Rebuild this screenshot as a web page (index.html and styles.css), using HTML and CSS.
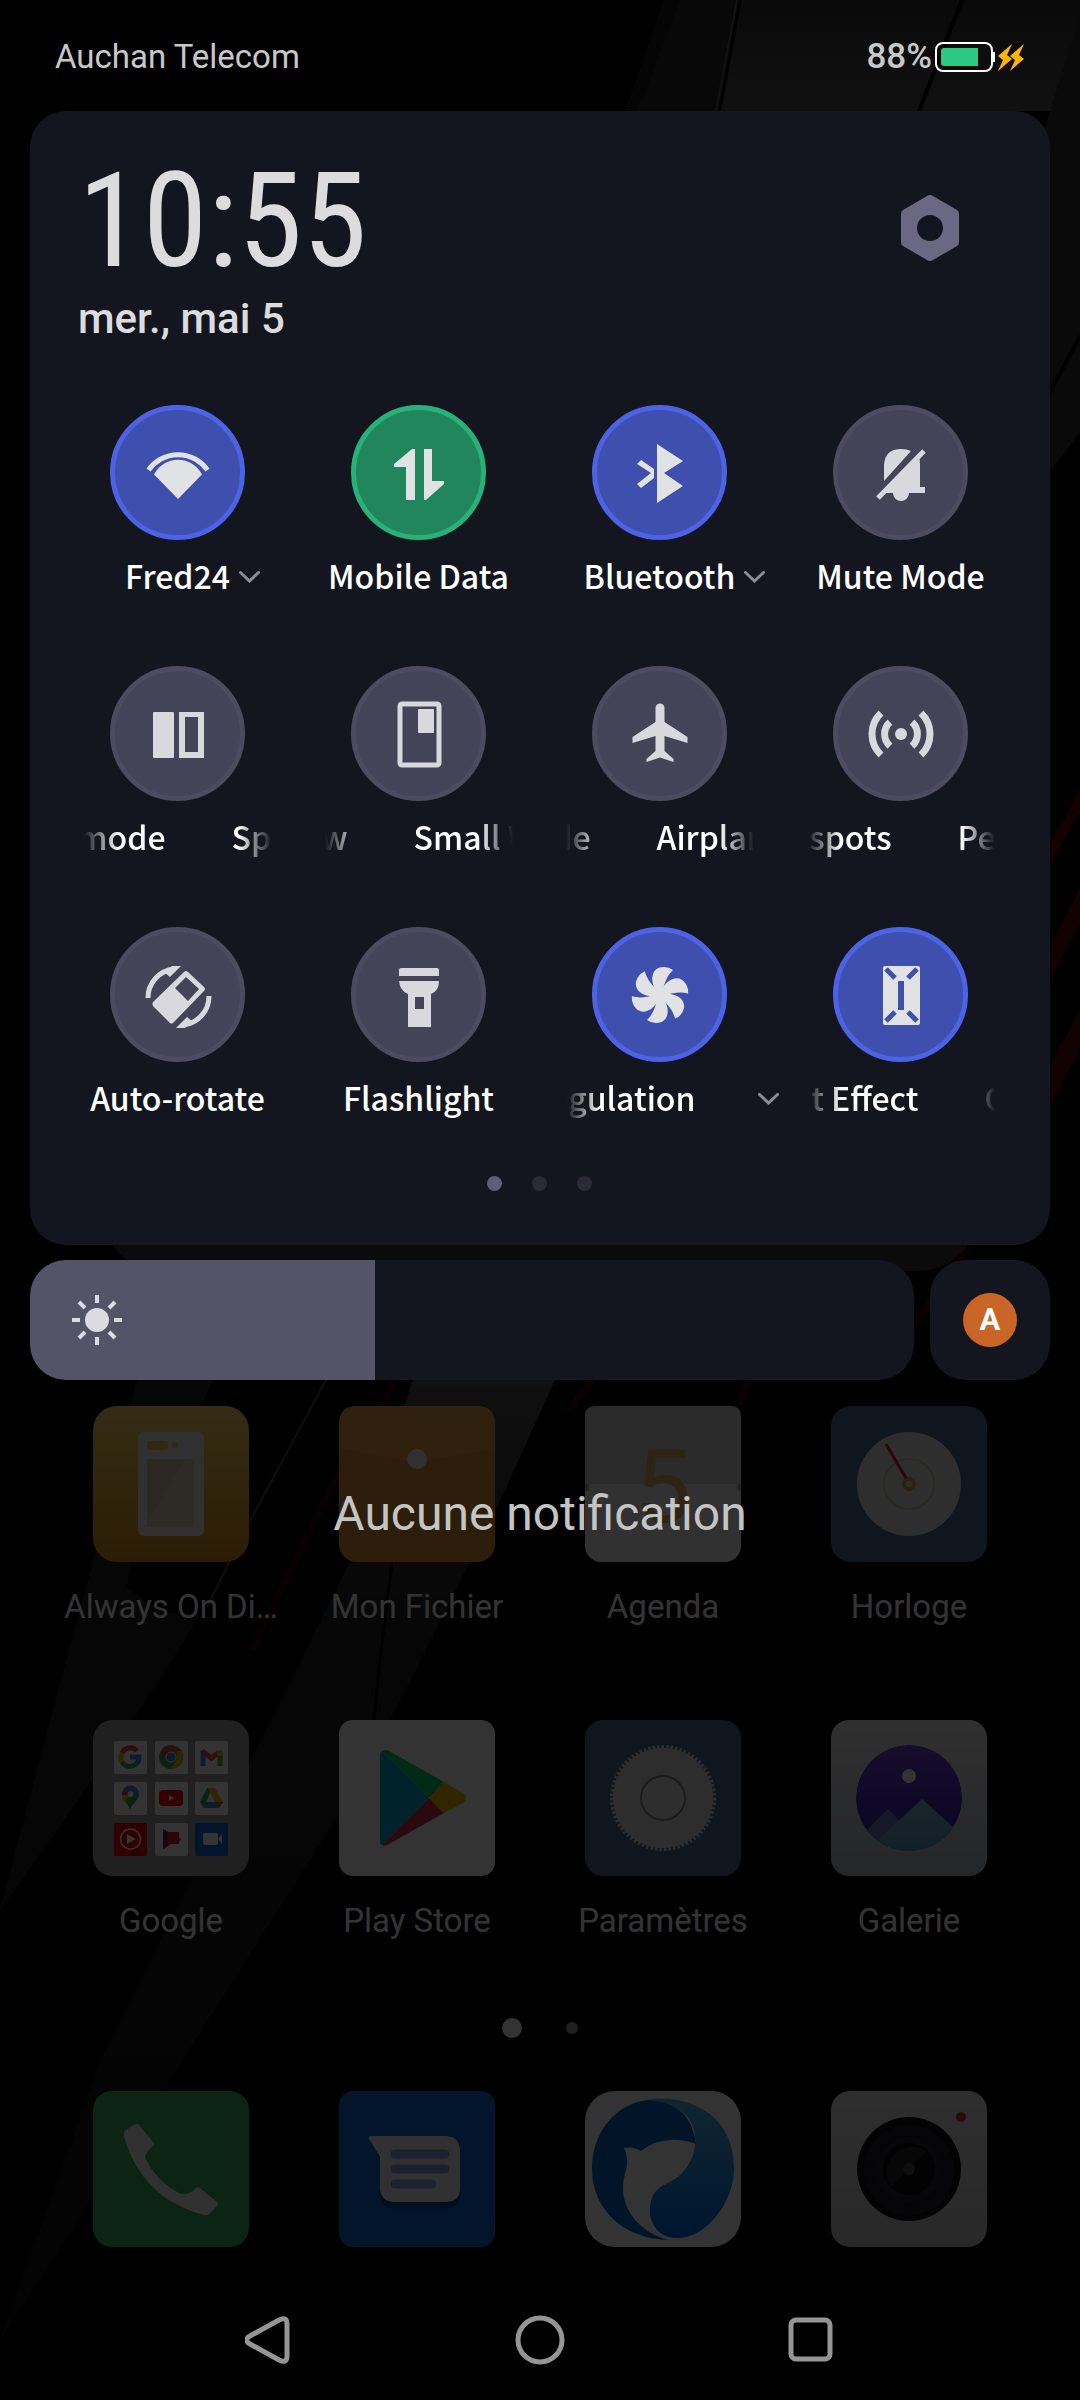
FILE: index.html
```html
<!DOCTYPE html>
<html lang="fr">
  <head>
    <meta charset="UTF-8" />
    <meta name="viewport" content="width=device-width, initial-scale=1.0" />
    <title>Quick Settings</title>
    <link rel="stylesheet" href="styles.css">
  </head>
  <body>
    <div class="screen">
      <svg class="wallpaper" viewBox="0 0 1080 2400" preserveAspectRatio="xMidYMin slice" aria-hidden="true">
        <defs>
          <linearGradient id="beam" x1="0" y1="0" x2="0" y2="1">
            <stop offset="0" stop-color="#505050" />
            <stop offset="0.25" stop-color="#232323" />
            <stop offset="1" stop-color="#121212" />
          </linearGradient>
          <linearGradient id="slab" x1="0" y1="0" x2="0" y2="1">
            <stop offset="0" stop-color="#323232" />
            <stop offset="0.25" stop-color="#555" />
            <stop offset="1" stop-color="#323232" />
          </linearGradient>
        </defs>
        <path fill="#1c1c1c" d="M664 0H690L640 111H625Z" />
        <path fill="#282828" d="M680 0H738L719 111H638Z" />
        <path fill="url(#slab)" d="M742 0H1080V432L1050 472V111H721Z" />
        <path stroke="#5a5a5a" stroke-width="2" d="M737 0L716 111" />
        <path stroke="#000" stroke-width="4" d="M962 0L919 111" />
        <path fill="#323232" d="M1080 15L1044 130V472L1080 432Z" />
        <path stroke="#000" stroke-width="4" d="M1050 392L1080 336" />
        <path fill="#5a0a05" d="M1050 845L1080 788V813L1050 864ZM1050 946L1080 888V926L1050 978ZM1050 1065L1080 1010V1050L1050 1105Z" />
        <path fill="#1e1e1e" d="M137 1380H213L131 1565L127 1587L160 1612L200 1615L160 1680L60 1826L0 1910L69 1650L93 1562Z" />
        <path fill="url(#beam)" d="M413 1380H555L505 1490L411 1680L338 1816L183 2060L0 2340L101 2060L193 1877L291 1680L350 1562Z" />
        <path stroke="#000" stroke-width="3" fill="none" d="M392 1562L381 1650L374 1720" />
        <path stroke="#464646" stroke-width="2" fill="none" d="M326 1380L249 1523L207 1607" />
        <path stroke="#2d0505" stroke-width="7" fill="none" d="M395 1380L331 1487L252 1650" />
        <path stroke="#370505" stroke-width="7" fill="none" d="M592 1380L568 1412M748 1380L738 1406M967 1247L916 1323" />
      </svg>

      <main class="home">
        <div class="widget"></div>
        <div class="apps">
          <a class="app" href="#">
            <svg viewBox="0 0 156 156" aria-hidden="true">
              <defs>
                <linearGradient id="gold" x1="0" y1="0" x2="0" y2="1">
                  <stop offset="0" stop-color="#ffdc64" />
                  <stop offset="1" stop-color="#dc8c1e" />
                </linearGradient>
              </defs>
              <rect width="156" height="156" rx="24" fill="url(#gold)" />
              <rect x="45" y="26" width="66" height="104" rx="6" fill="#f0f0f0" />
              <rect x="54" y="35" width="21" height="9" rx="3" fill="#f0c850" />
              <circle cx="82" cy="39" r="3" fill="#f0c850" />
              <path fill="#dccdaa" d="M54 53H101V121H54Z" />
              <path fill="#e6d7b4" d="M92 53H101V121H54V118Z" />
            </svg>
            Always On Di…
          </a>
          <a class="app" href="#">
            <svg viewBox="0 0 156 156" aria-hidden="true">
              <rect width="156" height="156" rx="18" fill="#e19637" />
              <path fill="#eba546" d="M0 18Q0 0 18 0H138Q156 0 156 18V42L92 54H64L0 42Z" />
              <circle cx="78" cy="53" r="10" fill="#eee" />
            </svg>
            Mon Fichier
          </a>
          <a class="app" href="#">
            <svg viewBox="0 0 156 156" aria-hidden="true">
              <rect width="156" height="156" rx="16" fill="#f5f5f5" />
              <path fill="#d7d7d7" d="M0 10Q0 0 10 0H146Q156 0 156 10V78H0Z" />
              <text class="agenda-day" x="78" y="116" text-anchor="middle">5</text>
              <path fill="#b4b4b4" d="M0 78H4V85H0ZM152 78H156V85H152Z" />
            </svg>
            Agenda
          </a>
          <a class="app" href="#">
            <svg viewBox="0 0 156 156" aria-hidden="true">
              <rect width="156" height="156" rx="20" fill="#506e96" />
              <circle cx="78" cy="78" r="52" fill="#e6e6e6" />
              <circle cx="78" cy="78" r="25" fill="none" stroke="#d2c8aa" stroke-width="2" />
              <path stroke="#dc1e28" stroke-width="3" d="M55 38L76 74" />
              <circle cx="78" cy="78" r="5" fill="none" stroke="#d7aa46" stroke-width="4" />
            </svg>
            Horloge
          </a>
          <a class="app" href="#">
            <svg viewBox="0 0 156 156" aria-hidden="true">
              <rect width="156" height="156" rx="20" fill="#a0a0a0" />
              <g fill="#fff">
                <rect x="21" y="21" width="33" height="33" rx="2" />
                <rect x="62" y="21" width="33" height="33" rx="2" />
                <rect x="102" y="21" width="33" height="33" rx="2" />
                <rect x="21" y="62" width="33" height="33" rx="2" />
                <rect x="62" y="62" width="33" height="33" rx="2" />
                <rect x="102" y="62" width="33" height="33" rx="2" />
                <rect x="62" y="103" width="33" height="33" rx="2" />
              </g>
              <rect x="21" y="103" width="33" height="33" rx="2" fill="#f00000" />
              <rect x="102" y="103" width="33" height="33" rx="2" fill="#0f69d7" />
              <!-- search -->
              <g fill="none" stroke-width="5">
                <path stroke="#ea4335" d="M29 33A9 9 0 0 1 44 31" />
                <path stroke="#fbbc05" d="M29 33A9 9 0 0 0 29 42" />
                <path stroke="#34a853" d="M29 42A9 9 0 0 0 43 44" />
                <path stroke="#4285f4" d="M37 37H46A9 9 0 0 1 43 44" />
              </g>
              <!-- browser -->
              <circle cx="78" cy="37" r="12" fill="#34a853" />
              <path fill="#ea4335" d="M68 31A12 12 0 0 1 88 31H78L72 39Z" />
              <path fill="#fbbc05" d="M88 31A12 12 0 0 1 78 49L84 39V31Z" />
              <circle cx="78" cy="37" r="5" fill="#4285f4" stroke="#fff" stroke-width="1" />
              <!-- mail -->
              <g fill="none" stroke-width="5">
                <path stroke="#4285f4" d="M110 46V31" />
                <path stroke="#34a853" d="M127 46V31" />
                <path stroke="#ea4335" d="M109 31L118.500 38L125 33" />
                <path stroke="#fbbc05" d="M127 36V30" />
              </g>
              <!-- maps -->
              <path fill="#34a853" d="M46 74C46 81 38 84 37 90C36 84 29 81 29 74Z" />
              <path fill="#4285f4" d="M29 74A8.500 8.500 0 0 1 46 74Z" />
              <path fill="#fbbc05" d="M38 75L31 82Q29 79 29 75Z" />
              <path fill="#ea4335" d="M29 75Q29 71 31 69L36 74Z" />
              <circle cx="37.500" cy="74" r="3" fill="#fff" />
              <!-- video -->
              <rect x="66" y="70" width="24" height="16" rx="4" fill="#f00" />
              <path fill="#fff" d="M76 75L81 78L76 81Z" />
              <!-- drive -->
              <path fill="#34a853" d="M114 68H119L111 88L107 82Z" />
              <path fill="#fbbc05" d="M115 68H122L130 82H122Z" />
              <path fill="#4285f4" d="M112 82H130L126 88H110Z" />
              <path fill="#ea4335" d="M123 82H130L126 88Z" />
              <!-- music -->
              <circle cx="37.500" cy="119" r="10" fill="none" stroke="#fff" stroke-width="1.500" />
              <path fill="#fff" d="M34 114L43 119L34 124Z" />
              <!-- movies -->
              <path fill="#dc143c" d="M70 109L75 112H86V117L88 119L86 122V124H78L70 129Z" />
              <path fill="#8c0f46" d="M70 109L75 112V126L70 129Z" />
              <!-- meet -->
              <rect x="110" y="113" width="15" height="12" rx="2" fill="#fff" />
              <path fill="#fff" d="M125 119L129 114V124Z" />
            </svg>
            Google
          </a>
          <a class="app" href="#">
            <svg viewBox="0 0 156 156" aria-hidden="true">
              <rect width="156" height="156" rx="14" fill="#fff" />
              <path fill="#00afd7" d="M41 35V121Q41 124 43 125L90 78L43 31Q41 32 41 35Z" />
              <path fill="#00d264" d="M43 31Q46 29 50 31L105 62L90 78Z" />
              <path fill="#f0be00" d="M105 62L124 73Q130 78 124 83L105 93L90 78Z" />
              <path fill="#d7324b" d="M43 125Q46 127 50 124L105 93L90 78Z" />
            </svg>
            Play Store
          </a>
          <a class="app" href="#">
            <svg viewBox="0 0 156 156" aria-hidden="true">
              <rect width="156" height="156" rx="18" fill="#506e96" />
              <circle cx="78" cy="78" r="50" fill="#e1e1e1" />
              <circle cx="78" cy="78" r="51" fill="none" stroke="#e1e1e1" stroke-width="4" stroke-dasharray="2.500 2" />
              <circle cx="78" cy="78" r="22" fill="#e6e6e6" stroke="#82878c" stroke-width="2" />
            </svg>
            Paramètres
          </a>
          <a class="app" href="#">
            <svg viewBox="0 0 156 156" aria-hidden="true">
              <defs>
                <linearGradient id="frame" x1="0" y1="0" x2="0" y2="1">
                  <stop offset="0" stop-color="#ebebee" />
                  <stop offset="1" stop-color="#b9bec8" />
                </linearGradient>
                <linearGradient id="night" x1="0" y1="0" x2="0" y2="1">
                  <stop offset="0" stop-color="#7341e1" />
                  <stop offset="0.8" stop-color="#3723af" />
                </linearGradient>
                <linearGradient id="hill" x1="0" y1="0" x2="0" y2="1">
                  <stop offset="0" stop-color="#78c3cd" />
                  <stop offset="1" stop-color="#5a9bc8" />
                </linearGradient>
                <clipPath id="lens"><circle cx="78" cy="78" r="53" /></clipPath>
              </defs>
              <rect width="156" height="156" rx="18" fill="url(#frame)" />
              <g clip-path="url(#lens)">
                <circle cx="78" cy="78" r="53" fill="url(#night)" />
                <path fill="#7d78c8" d="M57 89L20 126H94Z" />
                <path fill="url(#hill)" d="M91 79L34 132H150Z" />
              </g>
              <circle cx="78" cy="56" r="7" fill="#fff" />
            </svg>
            Galerie
          </a>
        </div>
        <div class="pager home-pager">
          <span class="home-dot current"></span>
          <span class="home-dot"></span>
        </div>
        <div class="dock">
          <a class="app" href="#" aria-label="Téléphone">
            <svg viewBox="0 0 156 156" aria-hidden="true">
              <rect width="156" height="156" rx="19" fill="#37b45f" />
              <path fill="#f5f5f5" d="M42 33Q44 32 46 34L60 51Q62 53 60 55Q53 60 52 67Q64 91 88 103Q97 104 103 97Q105 95 107 97L124 111Q126 113 124 115L116 123Q114 125 111 124Q48 107 31 45Q30 42 32 40Z" />
            </svg>
          </a>
          <a class="app" href="#" aria-label="Messages">
            <svg viewBox="0 0 156 156" aria-hidden="true">
              <rect width="156" height="156" rx="14" fill="#0f69d7" />
              <path fill="#0a4b9b" d="M32 52L41 70V106Q43 118 56 118H108Q121 116 122 102L100 60Z" />
              <path fill="#f5f5f5" d="M32 45H107Q121 46 121 60V98Q121 110 108 111H54Q42 110 41 98V66L30 48Q29 45 32 45Z" />
              <g stroke="#91a5eb" stroke-width="9" stroke-linecap="round">
                <path d="M56 63H106" />
                <path d="M56 78H106" />
                <path d="M56 93H93" />
              </g>
            </svg>
          </a>
          <a class="app" href="#" aria-label="Navigateur">
            <svg viewBox="0 0 156 156" aria-hidden="true">
              <defs>
                <linearGradient id="tail" x1="0" y1="0" x2="0" y2="1">
                  <stop offset="0" stop-color="#50bef0" />
                  <stop offset="1" stop-color="#0069f0" />
                </linearGradient>
              </defs>
              <rect width="156" height="156" rx="30" fill="#fff" />
              <path fill="#0069c8" d="M64 9C30 12 7 42 7 78C7 118 38 148 84 149C50 140 38 115 38 98C38 84 43 78 42 68Q42 62 39 57Q49 55 56 60Q80 42 111 53C108 28 94 10 64 9Z" />
              <path fill="url(#tail)" d="M62 9C80 4 149 8 149 78C149 112 120 148 92 147C72 147 64 130 65 118C66 92 84 96 97 82C118 62 120 12 62 9Z" />
            </svg>
          </a>
          <a class="app" href="#" aria-label="Appareil photo">
            <svg viewBox="0 0 156 156" aria-hidden="true">
              <defs>
                <linearGradient id="body" x1="0" y1="0" x2="0" y2="1">
                  <stop offset="0" stop-color="#e6e6e6" />
                  <stop offset="1" stop-color="#c8c8c8" />
                </linearGradient>
              </defs>
              <rect width="156" height="156" rx="19" fill="url(#body)" />
              <circle cx="78" cy="78" r="52" fill="#0f0f0f" />
              <circle cx="78" cy="79" r="45" fill="#1e2228" />
              <circle cx="78" cy="79" r="34" fill="#23262d" stroke="#1a1d22" stroke-width="2" />
              <circle cx="78" cy="78" r="26" fill="#0a0a0a" />
              <path fill="#232323" d="M60 96A26 26 0 0 1 96 60Z" />
              <circle cx="78" cy="78" r="6" fill="#464b50" />
              <circle cx="130" cy="26" r="5" fill="#dc3237" />
            </svg>
          </a>
        </div>
      </main>

      <div class="shade">
        <header class="status-bar">
          <span>Auchan Telecom</span>
          <span class="battery">
            88%
            <svg viewBox="0 0 90 32" aria-hidden="true">
              <rect x="1" y="2" width="56" height="28" rx="7" fill="none" stroke="#fff" stroke-width="2" />
              <path fill="#2cc985" d="M9 7H43V25H9Q6 25 6 22V10Q6 7 9 7Z" />
              <path fill="#fff" d="M58 11H60V21H58Z" />
              <path fill="#ffb400" d="M77 3L63 15L68 19L63 30L77 18L72 14ZM89 3L75 15L80 19L75 30L89 18L84 14Z" />
            </svg>
          </span>
        </header>

        <section class="panel">
          <div class="panel-header">
            <div>
              <div class="time">10:55</div>
              <div class="date">mer., mai 5</div>
            </div>
            <button class="settings" aria-label="Settings">
              <svg viewBox="0 0 60 68" aria-hidden="true">
                <path fill="#6a6883" fill-rule="evenodd" d="M27 2Q30 0 33 2L57 16Q59 17 59 20V48Q59 51 57 52L33 66Q30 68 27 66L3 52Q1 51 1 48V20Q1 17 3 16ZM30 21A13 13 0 0 0 30 47A13 13 0 0 0 30 21Z" />
              </svg>
            </button>
          </div>

          <div class="tiles">
            <button class="tile on">
              <span class="disc">
                <svg viewBox="-36 -36 72 72" aria-hidden="true">
                  <path fill="none" stroke="currentColor" stroke-width="5" d="M-29.500-3A36 36 0 0 1 29.500-3" />
                  <path fill="currentColor" d="M0 26L-24 1.500A27 27 0 0 1 24 1.500Z" />
                </svg>
              </span>
              <span class="label">Fred24
                <svg class="chevron" viewBox="0 0 21 12" aria-hidden="true"><path d="M1.500 1.500L10.500 10L19.500 1.500" /></svg>
              </span>
            </button>
            <button class="tile on data">
              <span class="disc">
                <svg viewBox="-36 -36 72 72" aria-hidden="true">
                  <path fill="currentColor" d="M-4-24V27H-13V-6H-25V-9L-7-24ZM5-24H13V8H25V11L7 27H5Z" />
                </svg>
              </span>
              <span class="label">Mobile Data</span>
            </button>
            <button class="tile on">
              <span class="disc">
                <svg viewBox="-36 -36 72 72" aria-hidden="true">
                  <path fill="currentColor" d="M-3-29L23-12L4 0L23 13L-3 30ZM-19-13L-6-4V5L-19 15L-23 11L-9 0L-23-9Z" />
                </svg>
              </span>
              <span class="label">Bluetooth
                <svg class="chevron" viewBox="0 0 21 12" aria-hidden="true"><path d="M1.500 1.500L10.500 10L19.500 1.500" /></svg>
              </span>
            </button>
            <button class="tile">
              <span class="disc">
                <svg viewBox="-36 -36 72 72" aria-hidden="true">
                  <path fill="currentColor" d="M-17 8V-8Q-16-24 0-24Q6-24 10-22ZM-19 20L18-16Q19-13 19-8V14H24V20H8A7.500 7.500 0 0 1-8 20Z" />
                  <path stroke="currentColor" stroke-width="5" d="M-23 25L23-22" />
                </svg>
              </span>
              <span class="label">Mute Mode</span>
            </button>

            <button class="tile" aria-label="Split mode">
              <span class="disc">
                <svg viewBox="-36 -36 72 72" aria-hidden="true">
                  <rect x="-25" y="-22" width="21" height="46" rx="1" fill="currentColor" />
                  <path fill="currentColor" fill-rule="evenodd" d="M1-22H26V24H1ZM7-17V18H20V-17Z" />
                </svg>
              </span>
              <span class="marquee">
                <span class="leaving" style="width: 82px">mode</span>
                <span>Sp</span>
              </span>
            </button>
            <button class="tile" aria-label="Small Window">
              <span class="disc">
                <svg viewBox="-36 -36 72 72" aria-hidden="true">
                  <rect x="-19" y="-30" width="39" height="61" rx="2" fill="none" stroke="currentColor" stroke-width="5" />
                  <rect x="-1" y="-25" width="16" height="24" rx="1" fill="currentColor" />
                </svg>
              </span>
              <span class="marquee">
                <span class="leaving" style="width: 23px">w</span>
                <span>Small W</span>
              </span>
            </button>
            <button class="tile" aria-label="Airplane mode">
              <span class="disc">
                <svg viewBox="-36 -36 72 72" aria-hidden="true">
                  <path fill="currentColor" d="M-4.500-12V-26A4.500 4.500 0 0 1 4.500-26V-12L27.500 3V9L4.500 2V17L13.500 25V28L0 23.500L-13.500 28V25L-4.500 17V2L-27.500 9V3Z" />
                </svg>
              </span>
              <span class="marquee">
                <span class="leaving" style="width: 25px">de</span>
                <span>Airplan</span>
              </span>
            </button>
            <button class="tile" aria-label="Personal hotspots">
              <span class="disc">
                <svg viewBox="-36 -36 72 72" aria-hidden="true">
                  <circle r="6" fill="currentColor" />
                  <path fill="none" stroke="currentColor" stroke-width="7" d="M-11-12A16 16 0 0 0-11 12M11-12A16 16 0 0 1 11 12M-20-21A29 29 0 0 0-20 21M20-21A29 29 0 0 1 20 21" />
                </svg>
              </span>
              <span class="marquee">
                <span class="leaving" style="width: 85px">tspots</span>
                <span>Pe</span>
              </span>
            </button>

            <button class="tile">
              <span class="disc">
                <svg viewBox="-36 -36 72 72" aria-hidden="true">
                  <path fill="currentColor" fill-rule="evenodd" d="M6-23Q8-25 10-23L26-8Q28-6 26-4L-5 28Q-6 29-8 28L-25 11Q-26 9-25 7ZM8-18L-3-7L10 6L21-6Z" />
                  <g id="sweep">
                    <path fill="none" stroke="currentColor" stroke-width="5" d="M-30 3A29 29 0 0 1-4-26" />
                    <path fill="currentColor" d="M3-29L-8-18L-14-23L-6-29Z" />
                  </g>
                  <use href="#sweep" transform="rotate(180 0.500 2)" />
                </svg>
              </span>
              <span class="label">Auto-rotate</span>
            </button>
            <button class="tile">
              <span class="disc">
                <svg viewBox="-36 -36 72 72" aria-hidden="true">
                  <path fill="currentColor" fill-rule="evenodd" d="M-18-27H18Q20-27 20-25V-19H-20V-25Q-20-27-18-27ZM-20-14H20Q20-4 12-1V32H-11V-1Q-19-4-20-14ZM-4 2V14H5V2Z" />
                </svg>
              </span>
              <span class="label">Flashlight</span>
            </button>
            <button class="tile on" aria-label="Temperature regulation">
              <span class="disc">
                <svg viewBox="-36 -36 72 72" aria-hidden="true">
                  <g fill="currentColor">
                    <circle r="6" />
                    <path id="blade" d="M-3-3C-11-14-9-28 4-28Q9-28 13-25C7-19 5-13 3-5Z" />
                    <use href="#blade" transform="rotate(60)" />
                    <use href="#blade" transform="rotate(120)" />
                    <use href="#blade" transform="rotate(180)" />
                    <use href="#blade" transform="rotate(240)" />
                    <use href="#blade" transform="rotate(300)" />
                  </g>
                </svg>
              </span>
              <span class="label-box">
                <span class="marquee">
                  <span class="leaving" style="width: 130px">egulation</span>
                </span>
                <svg class="chevron" viewBox="0 0 21 12" aria-hidden="true"><path d="M1.500 1.500L10.500 10L19.500 1.500" /></svg>
              </span>
            </button>
            <button class="tile on" aria-label="Light Effect">
              <span class="disc">
                <svg viewBox="-36 -36 72 72" aria-hidden="true">
                  <rect x="-18" y="-29" width="37" height="59" rx="2" fill="currentColor" />
                  <path stroke="#3f4fad" stroke-width="5" d="M-15-26L-6-17M16-26L7-17M-15 26L-6 17M16 26L7 17" />
                  <path stroke="#3f4fad" stroke-width="6" d="M0-14V15" />
                </svg>
              </span>
              <span class="marquee">
                <span class="leaving" style="width: 112px">t Effect</span>
                <span>C</span>
              </span>
            </button>
          </div>

          <div class="pager">
            <span class="dot current"></span>
            <span class="dot"></span>
            <span class="dot"></span>
          </div>
        </section>

        <div class="brightness">
          <label class="slider">
            <svg viewBox="-26 -26 52 52" aria-hidden="true">
              <circle r="12" fill="#dcdce0" />
              <path stroke="#dcdce0" stroke-width="4" d="M0-25V-17M0 25V17M-25 0H-17M25 0H17M-18-18L-12-12M18-18L12-12M-18 18L-12 12M18 18L12 12" />
            </svg>
            <input type="range" min="0" max="100" value="39" aria-label="Brightness" />
          </label>
          <button class="auto" aria-label="Auto brightness"><span>A</span></button>
        </div>

        <p class="empty">Aucune notification</p>

        <nav class="nav-bar">
          <button aria-label="Back">
            <svg viewBox="0 0 50 50" aria-hidden="true"><path d="M34 5Q42 1 42 9V41Q42 49 34 45L5 29Q-2 25 5 21Z" /></svg>
          </button>
          <button aria-label="Home">
            <svg viewBox="0 0 50 50" aria-hidden="true"><circle cx="25" cy="25" r="22" /></svg>
          </button>
          <button aria-label="Recents">
            <svg viewBox="0 0 50 50" aria-hidden="true"><rect x="6" y="5" width="39" height="39" rx="5" /></svg>
          </button>
        </nav>
      </div>
    </div>
  </body>
</html>
```
FILE: styles.css
```css
* {
  box-sizing: border-box;
}
body {
  margin: 0;
  background-color: #000;
  font-family: "Roboto", sans-serif;
}
button {
  padding: 0;
  border: none;
  background: none;
  color: inherit;
  font: inherit;
  cursor: pointer;
}
svg {
  display: block;
}

/* wallpaper, launcher and shade are stacked in one grid cell */
.screen {
  display: grid;
  grid-template-columns: minmax(0, 1fr);
  min-height: 100vh;
  overflow: hidden;
}
.wallpaper,
.home,
.shade {
  grid-area: 1 / 1;
}
.wallpaper {
  width: 100%;
  height: 100%;
}

/* launcher */
.home {
  display: flex;
  flex-direction: column;
  justify-content: flex-end;
  padding: 0 48px 153px;
  color: #fff;
}
.widget {
  height: 240px;
  margin: 0 54px 135px;
  border-radius: 60px;
  background-color: #373937;
}
.apps,
.dock {
  display: grid;
  grid-template-columns: repeat(4, minmax(0, 1fr));
  row-gap: 93px;
}
.app {
  display: flex;
  flex-direction: column;
  align-items: center;
  gap: 25px;
  color: #fff;
  font-size: 33px;
  line-height: 40px;
  text-decoration: none;
  white-space: nowrap;
}
.app svg {
  width: 156px;
  height: 156px;
}
.agenda-day {
  fill: #e6b464;
  font-size: 102px;
  font-weight: 400;
}
.home-pager {
  margin: 77px 0 53px;
}
.home-dot {
  width: 12px;
  height: 12px;
  margin: 0 7px;
  border-radius: 50%;
  background-color: #a0a0a0;
}
.home-dot.current {
  width: 20px;
  height: 20px;
  background-color: #fff;
}

/* notification shade */
.shade {
  display: flex;
  flex-direction: column;
  padding: 0 30px;
  background-color: rgba(0, 0, 0, 0.8);
}
.status-bar {
  display: flex;
  align-items: center;
  justify-content: space-between;
  height: 111px;
  padding: 2px 25px 0;
  color: #c8c8c8;
  font-size: 33px;
}
.battery {
  display: flex;
  align-items: center;
  gap: 3px;
  font-size: 35px;
  font-weight: 500;
}
.battery svg {
  width: 90px;
  height: 32px;
}
.panel {
  padding: 50px 29px 54px 27px;
  border-radius: 36px;
  background-color: #14161f;
  color: #dcdcdf;
}
.panel-header {
  display: flex;
  justify-content: space-between;
  padding: 0 61px 0 21px;
}
.time {
  font-family: "Roboto Condensed", "Liberation Sans Narrow", "Roboto", sans-serif;
  font-size: 131px;
  line-height: 120px;
}
.date {
  margin: 14px 0 62px;
  font-size: 42px;
  font-weight: 500;
  line-height: 48px;
}
.settings {
  align-self: flex-start;
  margin-top: 33px;
}
.settings svg {
  width: 60px;
  height: 68px;
}
.tiles {
  display: grid;
  grid-template-columns: repeat(4, minmax(0, 1fr));
  row-gap: 67px;
}
.tile {
  display: flex;
  flex-direction: column;
  align-items: center;
  gap: 11px;
  color: #fff;
  font-family: "Noto Sans CJK SC", sans-serif;
  font-size: 32px;
  font-weight: 500;
  line-height: 48px;
  white-space: nowrap;
}
.disc {
  display: flex;
  align-items: center;
  justify-content: center;
  width: 135px;
  height: 135px;
  border: 5px solid #4c4b5f;
  border-radius: 50%;
  background-color: #444357;
  color: #d9d8dd;
}
.disc svg {
  width: 72px;
  height: 72px;
}
.tile.on .disc {
  border-color: #4c63e6;
  background-color: #3f4fad;
  color: #e1e2e4;
}
.tile.data .disc {
  border-color: #27b279;
  background-color: #22865c;
}
.label,
.label-box {
  position: relative;
}
.chevron {
  position: absolute;
  top: 20px;
  left: 100%;
  width: 21px;
  height: 12px;
  margin-left: 9px;
  fill: none;
  stroke: #8c8c92;
  stroke-width: 3;
  stroke-linecap: round;
}
.label-box .chevron {
  margin-left: 4px;
}

/* long labels scroll; the copy that is leaving is cut off on its left */
.marquee {
  display: flex;
  gap: 66px;
  width: 188px;
  overflow: hidden;
  -webkit-mask-image: linear-gradient(to right, transparent, #000 34px, #000 154px, transparent);
  mask-image: linear-gradient(to right, transparent, #000 34px, #000 154px, transparent);
}
.leaving {
  display: flex;
  flex: none;
  justify-content: flex-end;
}
.pager {
  display: flex;
  align-items: center;
  justify-content: center;
  gap: 30px;
}
.panel .pager {
  margin-top: 55px;
}
.dot {
  width: 15px;
  height: 15px;
  border-radius: 50%;
  background-color: #2b2b38;
}
.dot.current {
  background-color: #5f5d78;
}

/* brightness */
.brightness {
  display: flex;
  gap: 16px;
  margin-top: 15px;
}
.slider {
  position: relative;
  flex: 1;
  height: 120px;
}
.slider svg {
  position: absolute;
  top: 34px;
  left: 41px;
  width: 52px;
  height: 52px;
  pointer-events: none;
}
.slider input {
  display: block;
  width: 100%;
  height: 100%;
  margin: 0;
  border-radius: 36px;
  background: linear-gradient(to right, #545368 39%, #14161f 39%);
  -webkit-appearance: none;
  appearance: none;
}
.slider input::-webkit-slider-thumb {
  width: 1px;
  height: 120px;
  background: transparent;
  -webkit-appearance: none;
}
.auto {
  display: flex;
  align-items: center;
  justify-content: center;
  width: 120px;
  border-radius: 36px;
  background-color: #14161f;
}
.auto span {
  width: 54px;
  height: 54px;
  border-radius: 50%;
  background-color: #c96526;
  color: #fff;
  font-size: 31px;
  font-weight: 700;
  line-height: 54px;
}
.empty {
  margin: 106px 0 0;
  color: #c4c4c4;
  font-size: 48px;
  line-height: 56px;
  text-align: center;
}

/* system navigation */
.nav-bar {
  display: flex;
  justify-content: center;
  margin-top: auto;
  padding-bottom: 35px;
}
.nav-bar button {
  display: flex;
  justify-content: center;
  width: 270px;
}
.nav-bar svg {
  width: 50px;
  height: 50px;
  fill: none;
  stroke: #959595;
  stroke-width: 5;
}
```
